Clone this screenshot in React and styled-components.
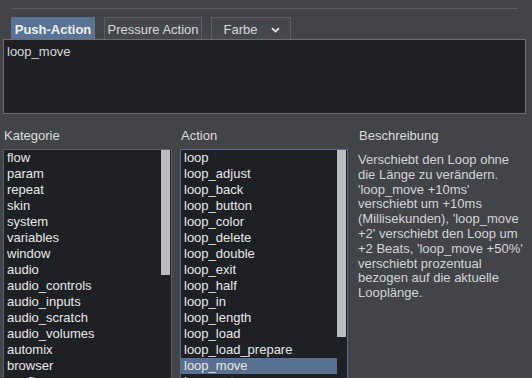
import styled, { createGlobalStyle } from 'styled-components';

const Global = createGlobalStyle`
  body {
    margin: 0;
    background: #434448;
    font-family: "Liberation Sans", Arial, sans-serif;
  }
`;

const kategorien = [
  'flow', 'param', 'repeat', 'skin', 'system', 'variables', 'window', 'audio',
  'audio_controls', 'audio_inputs', 'audio_scratch', 'audio_volumes', 'automix',
  'browser', 'config',
];

const actions = [
  'loop', 'loop_adjust', 'loop_back', 'loop_button', 'loop_color', 'loop_delete',
  'loop_double', 'loop_exit', 'loop_half', 'loop_in', 'loop_length', 'loop_load',
  'loop_load_prepare', 'loop_move', 'loop_out',
];

const Page = styled.div`
  width: 532px;
  height: 378px;
  overflow: hidden;
  background: #434448;
  color: #dcdcdc;
  font-size: 13px;
`;

const TopRule = styled.div`
  margin: 8px 14px 0 11px;
  border-top: 1px solid #5a5b5f;
`;

const TabBar = styled.div`
  display: flex;
  gap: 9px;
  margin: 8px 0 0 11px;
  height: 22px;
`;

const Tab = styled.div`
  display: flex;
  align-items: center;
  justify-content: center;
  gap: 14px;
  box-sizing: border-box;
  width: ${p => p.$w}px;
  height: 22px;
  padding-top: 2px;
  border: 1px solid ${p => (p.$active ? '#5b7393' : '#5c5d61')};
  border-bottom: none;
  background: ${p => (p.$active ? '#5a7394' : '#46474b')};
  color: ${p => (p.$active ? '#eef0f3' : '#d8d8d8')};
  font-weight: ${p => (p.$active ? 'bold' : 'normal')};
`;

const Chevron = styled.svg`
  width: 9px;
  height: 6px;
  margin-right: -2px;
`;

const Editor = styled.div`
  box-sizing: border-box;
  margin: 0 6px 0 3px;
  height: 75px;
  border: 1px solid #6d6e72;
  background: #1f2023;
  padding: 5px 3px 4px;
  color: #d8d8d8;
  line-height: 14px;
`;

const Columns = styled.div`
  display: grid;
  grid-template-columns: 169px 168px 1fr;
  column-gap: 8px;
  margin-left: 3px;
`;

const Column = styled.div`
  display: flex;
  flex-direction: column;
  padding-left: ${p => p.$pad || 0}px;
`;

const Label = styled.div`
  padding: 14px 0 6px 1px;
  line-height: 15px;
  color: #dddddd;
`;

const List = styled.div`
  display: flex;
  box-sizing: border-box;
  height: 240px;
  border: 1px solid ${p => (p.$focus ? '#5a6f8d' : '#5e5f63')};
  background: #1f2023;
`;

const Items = styled.div`
  flex: 1;
  overflow: hidden;
`;

const Item = styled.div`
  height: 16px;
  line-height: 16px;
  padding-left: 3px;
  color: #e8e8e8;
  background: ${p => (p.$selected ? '#587191' : 'transparent')};
  white-space: nowrap;
`;

const Track = styled.div`
  width: 9px;
  margin-right: 1px;
`;

const Thumb = styled.div`
  height: ${p => p.$h}px;
  background: #bdbdbf;
`;

const Description = styled.div`
  color: #d4d4d4;
  line-height: 14.8px;
  padding-top: 4px;
  padding-right: 8px;
`;

export default function App() {
  return (
    <Page>
      <Global />
      <TopRule />
      <TabBar>
        <Tab $active $w={84}>Push-Action</Tab>
        <Tab $w={98}>Pressure Action</Tab>
        <Tab $w={80}>
          Farbe
          <Chevron viewBox="0 0 9 6">
            <path d="M1 1.2 L4.5 4.6 L8 1.2" fill="none" stroke="#e4e4e4" strokeWidth="1.8" />
          </Chevron>
        </Tab>
      </TabBar>
      <Editor>loop_move</Editor>
      <Columns>
        <Column>
          <Label>Kategorie</Label>
          <List>
            <Items>
              {kategorien.map(k => (
                <Item key={k}>{k}</Item>
              ))}
            </Items>
            <Track>
              <Thumb $h={125} />
            </Track>
          </List>
        </Column>
        <Column>
          <Label>Action</Label>
          <List $focus>
            <Items>
              {actions.map(a => (
                <Item key={a} $selected={a === 'loop_move'}>{a}</Item>
              ))}
            </Items>
            <Track>
              <Thumb $h={187} />
            </Track>
          </List>
        </Column>
        <Column $pad={2}>
          <Label>Beschreibung</Label>
          <Description>
            Verschiebt den Loop ohne die Länge zu verändern. 'loop_move +10ms'
            verschiebt um +10ms (Millisekunden), 'loop_move +2' verschiebt den
            Loop um +2 Beats, 'loop_move +50%' verschiebt prozentual bezogen auf
            die aktuelle Looplänge.
          </Description>
        </Column>
      </Columns>
    </Page>
  );
}
